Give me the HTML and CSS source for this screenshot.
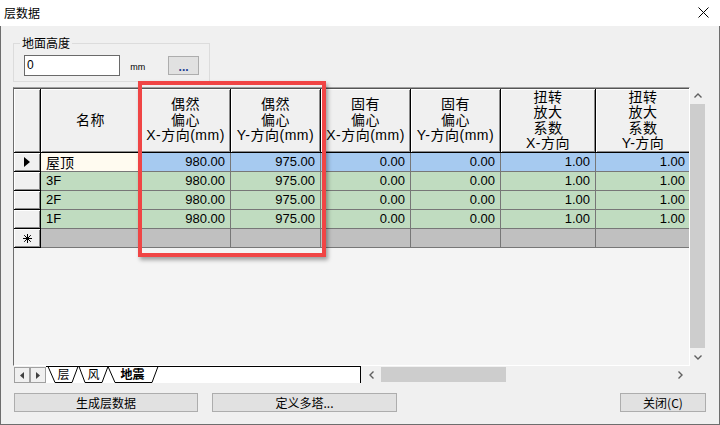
FILE: index.html
```html
<!DOCTYPE html>
<html lang="zh-CN">
<head>
<meta charset="utf-8">
<title>层数据</title>
<link rel="stylesheet" href="styles.css">
</head>
<body>
<div class="window">
  <div class="titlebar">
    <span class="title">层数据</span>
    <svg class="close" width="11" height="11" viewBox="0 0 11 11"><path d="M0.5 0.5L10.5 10.5M10.5 0.5L0.5 10.5" stroke="#000" stroke-width="1" fill="none"/></svg>
  </div>
  <div class="client">
    <fieldset class="group">
      <legend>地面高度</legend>
      <div class="group-row">
        <div class="input">0</div>
        <span class="unit">mm</span>
        <div class="dots-btn">...</div>
      </div>
    </fieldset>

    <div class="grid-area">
      <div class="grid">
        <div class="row head">
          <div class="ch rh"></div>
          <div class="ch">名称</div>
          <div class="ch">偶然<br>偏心<br>X-方向(mm)</div>
          <div class="ch">偶然<br>偏心<br>Y-方向(mm)</div>
          <div class="ch">固有<br>偏心<br>X-方向(mm)</div>
          <div class="ch">固有<br>偏心<br>Y-方向(mm)</div>
          <div class="ch">扭转<br>放大<br>系数<br>X-方向</div>
          <div class="ch">扭转<br>放大<br>系数<br>Y-方向</div>
        </div>
        <div class="row cur">
          <div class="rh"><svg width="6" height="10" viewBox="0 0 6 10"><path d="M0 0L6 5L0 10Z" fill="#000"/></svg></div>
          <div class="c n cream cjk">屋顶</div>
          <div class="c blue">980.00</div>
          <div class="c blue">975.00</div>
          <div class="c blue">0.00</div>
          <div class="c blue">0.00</div>
          <div class="c blue">1.00</div>
          <div class="c blue">1.00</div>
        </div>
        <div class="row">
          <div class="rh"></div>
          <div class="c n green">3F</div>
          <div class="c green">980.00</div>
          <div class="c green">975.00</div>
          <div class="c green">0.00</div>
          <div class="c green">0.00</div>
          <div class="c green">1.00</div>
          <div class="c green">1.00</div>
        </div>
        <div class="row">
          <div class="rh"></div>
          <div class="c n green">2F</div>
          <div class="c green">980.00</div>
          <div class="c green">975.00</div>
          <div class="c green">0.00</div>
          <div class="c green">0.00</div>
          <div class="c green">1.00</div>
          <div class="c green">1.00</div>
        </div>
        <div class="row">
          <div class="rh"></div>
          <div class="c n green">1F</div>
          <div class="c green">980.00</div>
          <div class="c green">975.00</div>
          <div class="c green">0.00</div>
          <div class="c green">0.00</div>
          <div class="c green">1.00</div>
          <div class="c green">1.00</div>
        </div>
        <div class="row">
          <div class="rh"><svg width="9" height="9" viewBox="0 0 9 9"><path d="M4.5 0V9M0 4.5H9M1.2 1.2L7.8 7.8M7.8 1.2L1.2 7.8" stroke="#000" stroke-width="1" fill="none"/></svg></div>
          <div class="c n gray"></div>
          <div class="c gray"></div>
          <div class="c gray"></div>
          <div class="c gray"></div>
          <div class="c gray"></div>
          <div class="c gray"></div>
          <div class="c gray"></div>
        </div>
      </div>
      <div class="vscroll">
        <div class="sb-btn"><svg width="8" height="5" viewBox="0 0 8 5"><path d="M0.5 4.5L4 1L7.5 4.5" stroke="#606060" stroke-width="1.4" fill="none"/></svg></div>
        <div class="vthumb"></div>
        <div class="sb-btn down"><svg width="8" height="5" viewBox="0 0 8 5"><path d="M0.5 0.5L4 4L7.5 0.5" stroke="#606060" stroke-width="1.4" fill="none"/></svg></div>
      </div>
    </div>

    <div class="strip">
      <div class="tabbar">
        <div class="tnav"><svg width="4" height="7" viewBox="0 0 4 7"><path d="M4 0L0 3.5L4 7Z" fill="#404040"/></svg></div>
        <div class="tnav"><svg width="4" height="7" viewBox="0 0 4 7"><path d="M0 0L4 3.5L0 7Z" fill="#404040"/></svg></div>
        <svg class="tabs" width="114" height="17" viewBox="0 0 114 17">
          <rect x="0" y="0" width="114" height="17" fill="#fff"/>
          <path d="M0 0.5H114" stroke="#000" stroke-width="1"/>
          <polygon points="2,0.5 9,16.5 26,16.5 32,0.5" fill="#fff" stroke="#000" stroke-width="1"/>
          <text x="17.5" y="12.5" class="tabtext" text-anchor="middle">层</text>
          <polygon points="33,0.5 39,16.5 56,16.5 62,0.5" fill="#fff" stroke="#000" stroke-width="1"/>
          <text x="47.5" y="12.5" class="tabtext" text-anchor="middle">风</text>
          <polygon points="62,0.5 69,16.5 106,16.5 112,0.5" fill="#fff" stroke="#000" stroke-width="1"/>
          <text x="86.5" y="12.5" class="tabtext active" text-anchor="middle">地震</text>
        </svg>
        <div class="tab-rest"></div>
      </div>
      <div class="hscroll">
        <div class="hs-btn"><svg width="5" height="8" viewBox="0 0 5 8"><path d="M4.5 0.5L1 4L4.5 7.5" stroke="#606060" stroke-width="1.4" fill="none"/></svg></div>
        <div class="hthumb"></div>
        <div class="hs-track"></div>
        <div class="hs-btn"><svg width="5" height="8" viewBox="0 0 5 8"><path d="M0.5 0.5L4 4L0.5 7.5" stroke="#606060" stroke-width="1.4" fill="none"/></svg></div>
      </div>
      <div class="corner"></div>
    </div>

    <div class="buttons">
      <div class="btn b1">生成层数据</div>
      <div class="btn b2">定义多塔...</div>
      <div class="btn b3">关闭(C)</div>
    </div>
  </div>
  <div class="redbox"></div>
</div>
</body>
</html>
```

FILE: styles.css
```css
html, body {
  margin: 0;
  padding: 0;
  background: #f0f0f0;
}
body {
  font-family: "Liberation Sans", "Noto Sans CJK SC", sans-serif;
  color: #000;
}
.window {
  position: relative;
  width: 720px;
  height: 425px;
  display: flex;
  flex-direction: column;
  overflow: hidden;
}
.titlebar {
  height: 26px;
  flex: none;
  background: #fff;
  display: flex;
  align-items: center;
  justify-content: space-between;
  padding: 0 11px 1px 4px;
  box-sizing: border-box;
}
.title {
  font-family: "Noto Sans CJK SC", sans-serif;
  font-size: 12px;
  line-height: 16px;
}
.close {
  display: block;
}
.client {
  flex: 1;
  display: flex;
  flex-direction: column;
  background: #f0f0f0;
  border: 1px solid #6e6e6e;
  border-top: none;
  padding: 0 13px 0 12px;
  min-height: 0;
}
.group {
  margin: 9px 0 0 0;
  width: 197px;
  box-sizing: border-box;
  border: 1px solid #dcdcdc;
  padding: 4px 10px 5px 10px;
  min-width: 0;
}
.group legend {
  font-family: "Noto Sans CJK SC", sans-serif;
  font-size: 12px;
  line-height: 16px;
  padding: 0 2px;
  margin-left: -4px;
}
.group-row {
  display: flex;
  align-items: center;
  height: 21px;
}
.input {
  width: 97px;
  height: 21px;
  box-sizing: border-box;
  border: 1px solid #6a6a6a;
  background: #fff;
  font-size: 12px;
  line-height: 19px;
  padding-left: 2px;
}
.unit {
  margin-left: 10px;
  font-size: 9px;
  line-height: 10px;
  margin-top: 2px;
}
.dots-btn {
  margin-left: 23px;
  width: 31px;
  height: 19px;
  box-sizing: border-box;
  border: 1px solid #adadad;
  background: #e1e1e1;
  color: #1c3f94;
  font-size: 12px;
  line-height: 20px;
  text-align: center;
  font-weight: bold;
}

.grid-area {
  margin-top: 5px;
  height: 279px;
  display: flex;
  flex: none;
}
.grid {
  width: 677px;
  height: 279px;
  box-sizing: border-box;
  border-top: 1px solid #a0a0a0;
  border-left: 1px solid #6d6d6d;
  border-right: 1px solid #fff;
  border-bottom: 1px solid #fff;
  background: #f4f4f4;
  overflow: hidden;
}
.row {
  display: grid;
  grid-template-columns: 27px 100px 90px 90px 90px 90px 95px 95px;
  width: max-content;
}
.row.head {
  border-top: 1px solid #555;
}
.ch {
  height: 64px;
  box-sizing: border-box;
  background: #f0f0f0;
  border-right: 1px solid #000;
  border-bottom: 1px solid #000;
  box-shadow: inset 1px 1px #fff, inset -1px -1px #8a8a8a;
  display: flex;
  flex-direction: column;
  justify-content: center;
  align-items: center;
  text-align: center;
  font-size: 14px;
  letter-spacing: 0.5px;
  line-height: 15.5px;
  overflow: hidden;
}
.rh {
  height: 19px;
  box-sizing: border-box;
  background: #f0f0f0;
  border-right: 1px solid #000;
  border-bottom: 1px solid #000;
  box-shadow: inset 1px 1px #fff, inset -1px -1px #8a8a8a;
  display: flex;
  align-items: center;
  justify-content: center;
}
.ch.rh {
  height: 64px;
}
.rh svg {
  display: block;
}
.c {
  height: 19px;
  box-sizing: border-box;
  border-right: 1px solid #777;
  border-bottom: 1px solid #777;
  text-align: right;
  padding-right: 5px;
  font-size: 13px;
  line-height: 18px;
  white-space: nowrap;
  overflow: hidden;
}
.c.n {
  text-align: left;
  padding-left: 5px;
  padding-right: 0;
}
.cjk {
  font-family: "Noto Sans CJK SC", sans-serif;
  font-size: 14px;
}
.cream { background: #fffbf0; }
.blue { background: #a6caf0; }
.green { background: #c0dcc0; }
.gray { background: #c0c0c0; }

.vscroll {
  width: 16px;
  display: flex;
  flex-direction: column;
  background: #f0f0f0;
}
.sb-btn {
  height: 17px;
  width: 15px;
  display: flex;
  align-items: center;
  justify-content: center;
}
.sb-btn.down {
  height: 18px;
}
.sb-btn svg, .hs-btn svg, .tnav svg {
  display: block;
}
.vthumb {
  flex: 1;
  width: 15px;
  background: #cdcdcd;
}

.strip {
  height: 17px;
  display: flex;
  flex: none;
}
.tabbar {
  width: 348px;
  display: flex;
  padding-left: 1px;
  box-sizing: border-box;
}
.tnav {
  width: 16px;
  height: 16px;
  box-sizing: border-box;
  border: 1px solid #a0a0a0;
  background: #f0f0f0;
  display: flex;
  align-items: center;
  justify-content: center;
  margin-top: 1px;
}
.tabs {
  display: block;
  flex: none;
}
.tabtext {
  font-family: "Noto Sans CJK SC", sans-serif;
  font-size: 12px;
  fill: #000;
}
.tabtext.active {
  font-weight: bold;
}
.tab-rest {
  flex: 1;
  background: #fff;
  border-top: 1px solid #000;
  border-right: 1px solid #000;
}
.hscroll {
  width: 329px;
  height: 15px;
  margin-top: 1px;
  display: flex;
  background: #f0f0f0;
}
.hs-btn {
  width: 20px;
  height: 15px;
  display: flex;
  align-items: center;
  justify-content: center;
}
.hthumb {
  width: 125px;
  background: #cdcdcd;
}
.hs-track {
  flex: 1;
}
.corner {
  width: 16px;
}

.buttons {
  margin-top: 10px;
  display: flex;
}
.btn {
  height: 19px;
  box-sizing: border-box;
  border: 1px solid #adadad;
  background: #e1e1e1;
  font-family: "Noto Sans CJK SC", sans-serif;
  font-size: 12px;
  line-height: 17px;
  text-align: center;
}
.b1 {
  margin-left: 1px;
  width: 184px;
}
.b2 {
  margin-left: 14px;
  width: 185px;
}
.b3 {
  margin-left: auto;
  width: 86px;
}

.redbox {
  position: absolute;
  left: 138px;
  top: 81px;
  width: 188px;
  height: 176px;
  box-sizing: border-box;
  border: 4px solid #f04545;
  box-shadow: 2px 3px 4px rgba(0, 0, 0, 0.35);
}
```
